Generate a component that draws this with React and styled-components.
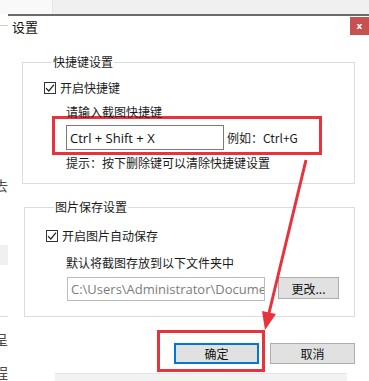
import React from 'react';
import styled, { createGlobalStyle } from 'styled-components';

const GlobalStyle = createGlobalStyle`
  html, body { margin: 0; padding: 0; background: #fff; }
  * { box-sizing: border-box; }
`;

const Page = styled.div`
  position: relative;
  width: 369px;
  height: 381px;
  overflow: hidden;
  background: #fff;
  font-family: "Noto Sans CJK SC", "Noto Sans", sans-serif;
  font-size: 12px;
  color: #1a1a1a;
`;

const TopStrip = styled.div`
  display: flex;
  height: 14px;
`;

const StripPart = styled.div`
  flex: ${p => (p.$grow ? 1 : '0 0 53px')};
  background: ${p => (p.$grow ? '#f0f0f0' : '#f9f9f9')};
  border-right: ${p => (p.$grow ? 'none' : '1px solid #e6e6e6')};
`;

const Body = styled.div`
  display: flex;
`;

const Gutter = styled.div`
  flex: 0 0 8px;
  display: flex;
  flex-direction: column;
  overflow: hidden;
`;

const GutterLine = styled.div`
  height: ${p => p.$h || 1}px;
  margin-top: ${p => p.$top}px;
  background: ${p => p.$color};
  width: 100%;
`;

const GutterGlyph = styled.div`
  margin-top: ${p => p.$top}px;
  margin-left: -6px;
  height: 16px;
  line-height: 16px;
  font-size: 14px;
  color: #4a4a4a;
  white-space: nowrap;
`;

const Dialog = styled.div`
  flex: 1;
  border-top: 2px solid #6b6b6b;
  display: flex;
  flex-direction: column;
`;

const TitleBar = styled.div`
  display: flex;
  justify-content: space-between;
  align-items: flex-start;
  height: 22px;
`;

const Title = styled.div`
  padding-left: 4px;
  padding-top: 3px;
  font-size: 13px;
  line-height: 16px;
  color: #111;
`;

const CloseButton = styled.div`
  width: 19px;
  height: 18px;
  margin-top: 1px;
  background: #c75050;
  color: #fff;
  font-family: "DejaVu Sans", sans-serif;
  font-weight: bold;
  font-size: 9px;
  display: flex;
  align-items: center;
  justify-content: center;
`;

const Content = styled.div`
  padding: 0 14px;
  display: flex;
  flex-direction: column;
`;

const Group = styled.fieldset`
  margin: ${p => p.$top}px 0 0 ${p => p.$left || 0}px;
  border: 1px solid #dcdcdc;
  padding: ${p => p.$padTop}px 0 ${p => p.$padBottom}px 21px;
  min-width: 0;
`;

const Legend = styled.legend`
  margin-left: 8px;
  padding: 0 1px;
  line-height: 16px;
  height: 16px;
  font-size: 12px;
  color: #1a1a1a;
`;

const CheckRow = styled.label`
  display: flex;
  align-items: center;
  gap: 4px;
  height: 16px;
  line-height: 16px;
`;

const Box = styled.span`
  width: 12px;
  height: 12px;
  border: 1px solid #333;
  background: #fff;
  display: flex;
  align-items: center;
  justify-content: center;
`;

const Line = styled.div`
  margin: ${p => p.$top || 0}px 0 0 ${p => p.$indent || 0}px;
  height: 16px;
  line-height: 16px;
  white-space: nowrap;
  color: #1a1a1a;
`;

const Highlight = styled.div`
  border: 3px solid #e8323c;
`;

const ShortcutRow = styled(Highlight)`
  display: flex;
  align-items: center;
  gap: 3px;
  width: 270px;
  margin: -4px 0 0 8px;
  padding: 6px 0 2px 11px;
`;

const TextBox = styled.div`
  flex: 0 0 auto;
  width: ${p => p.$w}px;
  height: ${p => p.$h}px;
  border: 1px solid ${p => p.$disabled ? '#bdbdbd' : '#7a7a7a'};
  background: #fff;
  padding: 0 3px;
  display: flex;
  align-items: center;
  overflow: hidden;
  white-space: nowrap;
  font-family: "Open Sans", "Noto Sans CJK SC", sans-serif;
  font-size: 13px;
  color: ${p => p.$disabled ? '#7d7d7d' : '#111'};
`;

const Example = styled.span`
  font-family: "Noto Sans CJK SC", sans-serif;
  font-size: 12px;
  white-space: nowrap;
`;

const PathRow = styled.div`
  display: flex;
  align-items: flex-start;
  gap: 13px;
  margin: 6px 0 0 21px;
`;

const Button = styled.div`
  flex: 0 0 auto;
  width: ${p => p.$w}px;
  height: ${p => p.$h}px;
  background: #e1e1e1;
  border: ${p => p.$primary ? '2px solid #0078d7' : '1px solid #adadad'};
  display: flex;
  align-items: center;
  justify-content: center;
  font-size: 12px;
  color: #111;
`;

const Footer = styled.div`
  display: flex;
  justify-content: flex-end;
  align-items: flex-start;
  gap: 5px;
  margin-top: 13px;
`;

const OkFrame = styled(Highlight)`
  padding: 10px 3px 5px 14px;
`;

const CancelWrap = styled.div`
  padding-top: 13px;
`;

const BottomStrip = styled.div`
  margin: 1px 0 0 47px;
  width: 292px;
  height: 10px;
  background: #f2f2f2;
  border-top: 1px solid #e4e4e4;
`;

const Overlay = styled.svg`
  position: absolute;
  left: 0;
  top: 0;
  pointer-events: none;
`;

const Check = () => (
  <Box>
    <svg width="10" height="10" viewBox="0 0 10 10">
      <path d="M1 5.2 L3.8 8 L9 1.6" fill="none" stroke="#222" strokeWidth="1.2" />
    </svg>
  </Box>
);

export default function App() {
  return (
    <Page>
      <GlobalStyle />
      <TopStrip>
        <StripPart />
        <StripPart $grow />
      </TopStrip>
      <Body>
        <Gutter>
          <GutterLine $top={11} $color="#cfcfcf" />
          <GutterGlyph $top={151}>去</GutterGlyph>
          <GutterLine $top={52} $h={20} $color="#f0f0f0" />
          <GutterLine $top={51} $color="#dcdcdc" />
          <GutterGlyph $top={14}>呈</GutterGlyph>
          <GutterGlyph $top={17}>程</GutterGlyph>
        </Gutter>
        <Dialog>
          <TitleBar>
            <Title>设置</Title>
            <CloseButton>x</CloseButton>
          </TitleBar>
          <Content>
            <Group $top={16} $padTop={10} $padBottom={12}>
              <Legend>快捷键设置</Legend>
              <CheckRow><Check />开启快捷键</CheckRow>
              <Line $top={8} $indent={22}>请输入截图快捷键</Line>
              <ShortcutRow>
                <TextBox $w={158} $h={25}>Ctrl + Shift + X</TextBox>
                <Example>例如：Ctrl+G</Example>
              </ShortcutRow>
              <Line $indent={22}>提示：按下删除键可以清除快捷键设置</Line>
            </Group>
            <Group $top={15} $left={2} $padTop={13} $padBottom={15}>
              <Legend>图片保存设置</Legend>
              <CheckRow><Check />开启图片自动保存</CheckRow>
              <Line $top={11} $indent={20}>默认将截图存放到以下文件夹中</Line>
              <PathRow>
                <TextBox $w={198} $h={24} $disabled>C:\Users\Administrator\Documen</TextBox>
                <Button $w={61} $h={22}>更改...</Button>
              </PathRow>
            </Group>
            <Footer>
              <OkFrame>
                <Button $w={85} $h={21} $primary>确定</Button>
              </OkFrame>
              <CancelWrap>
                <Button $w={85} $h={21}>取消</Button>
              </CancelWrap>
            </Footer>
          </Content>
          <BottomStrip />
        </Dialog>
      </Body>
      <Overlay width="369" height="381" viewBox="0 0 369 381">
        <line x1="306" y1="160" x2="269" y2="313" stroke="#e8323c" strokeWidth="3" />
        <polygon points="265,330 276,314 262,311" fill="#e8323c" />
      </Overlay>
    </Page>
  );
}
